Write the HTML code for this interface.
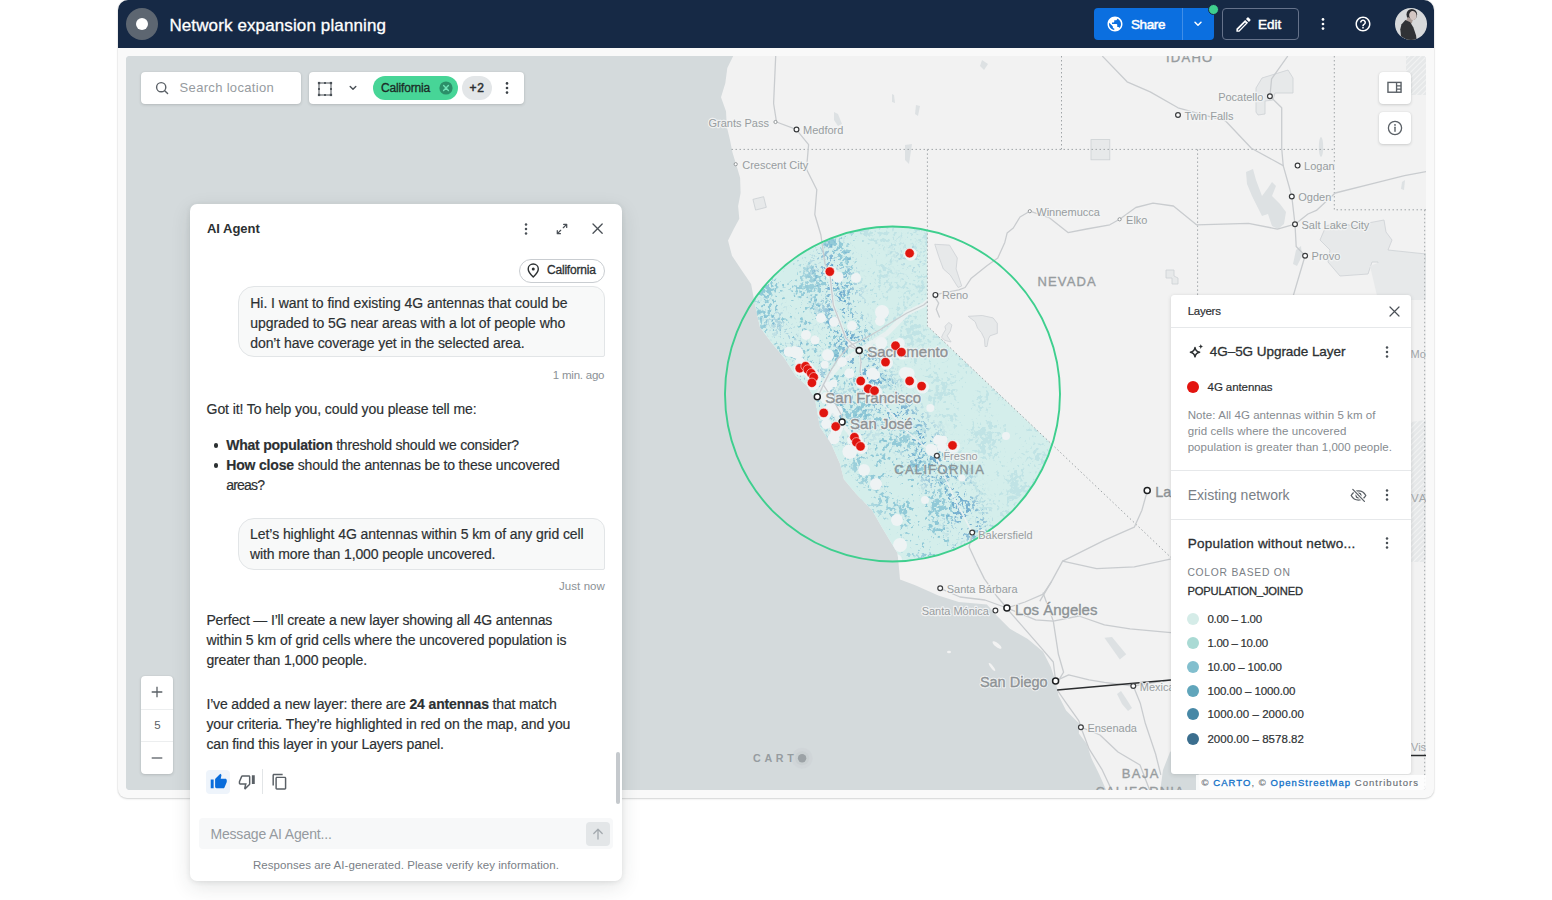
<!DOCTYPE html>
<html lang="en"><head><meta charset="utf-8"><title>Network expansion planning</title><style>
*{box-sizing:border-box;margin:0;padding:0}
html,body{width:1552px;height:900px;overflow:hidden;background:#fff}
body{font-family:"Liberation Sans",sans-serif;position:relative;color:#2c3032}
.abs{position:absolute}
.t{position:absolute;white-space:nowrap}
.frame{position:absolute;left:118px;top:0;width:1316px;height:798px;background:#f9f9f9;border-radius:10px 10px 9px 9px;box-shadow:0 1px 2px rgba(44,48,50,.18),0 0 0 1px rgba(44,48,50,.04)}
.topbar{position:absolute;left:118px;top:0;width:1316px;height:47.500px;background:#162945;border-radius:10px 10px 0 0}
.map{position:absolute;left:126px;top:56px;width:1300px;height:734px;border-radius:4px;overflow:hidden;background:#d4dadc}
.map svg{position:absolute;left:0;top:0}
.card{position:absolute;background:#fff;border-radius:4px;box-shadow:0 1px 3px rgba(44,48,50,.18),0 0 1px rgba(44,48,50,.12)}
.panel{position:absolute;background:#fff;border-radius:8px;box-shadow:0 6px 20px rgba(44,48,50,.12),0 1px 5px rgba(44,48,50,.10)}
.bubble{position:absolute;background:#f8f9f9;border:1px solid #e2e5e7;border-radius:16px 12px 2px 16px}
.sep{position:absolute;height:1px;background:#e6e8ea}
svg.ic{position:absolute;overflow:visible}
</style></head><body>
<div class="frame"></div>

<div class="topbar"></div>
<div class="abs" style="left:126px;top:8px;width:32px;height:32px;border-radius:50%;background:#5d6671"></div>
<div class="abs" style="left:136px;top:18px;width:12px;height:12px;border-radius:50%;background:#fff"></div>
<div class="t" style="left:169.4px;top:13.5px;font-size:17px;line-height:24px;color:#fff;-webkit-text-stroke:.3px #fff;letter-spacing:0.12px;">Network expansion planning</div>
<div class="abs" style="left:1094px;top:8px;width:120px;height:32px;border-radius:4px;background:#0b6fe0"></div>
<div class="abs" style="left:1182px;top:8px;width:1px;height:32px;background:rgba(255,255,255,.22)"></div>
<svg class="ic" style="left:1106.300px;top:15px" width="18" height="18" viewBox="0 0 24 24"><path fill="#fff" d="M12 2C6.48 2 2 6.48 2 12s4.48 10 10 10 10-4.480 10-10S17.520 2 12 2zm-1 17.930c-3.950-.490-7-3.850-7-7.930 0-.620.080-1.210.210-1.790L9 15v1c0 1.100.9 2 2 2v1.930zm6.900-2.540c-.260-.810-1-1.390-1.900-1.390h-1v-3c0-.550-.450-1-1-1H8v-2h2c.550 0 1-.450 1-1V7h2c1.100 0 2-.9 2-2v-.410c2.930 1.190 5 4.060 5 7.410 0 2.080-.8 3.970-2.100 5.390z"/></svg>
<div class="t" style="left:1130.9px;top:14.8px;font-size:13.5px;line-height:19px;color:#fff;-webkit-text-stroke:.5px #fff;letter-spacing:-0.36px;">Share</div>
<svg class="ic" style="left:1193px;top:20px" width="10" height="8" viewBox="0 0 10 8"><path d="M2 2.200L5 5.200L8 2.200" stroke="#fff" stroke-width="1.500" fill="none" stroke-linecap="round" stroke-linejoin="round"/></svg>
<div class="abs" style="left:1207.500px;top:3.500px;width:11px;height:11px;border-radius:50%;background:#3fcf8e;border:1.500px solid #162945"></div>
<div class="abs" style="left:1222px;top:8px;width:77px;height:32px;border-radius:4px;border:1px solid #65728a"></div>
<svg class="ic" style="left:1233.500px;top:14.500px" width="19" height="19" viewBox="0 0 24 24"><path fill="#fff" d="M3 17.250V21h3.750L17.810 9.940l-3.750-3.750L3 17.250zm2.920 2.330H5v-.920l9.060-9.060.920.920-9.060 9.060zM20.710 5.630l-2.340-2.340a.996.996 0 0 0-1.410 0l-1.830 1.830 3.750 3.750 1.830-1.830a.996.996 0 0 0 0-1.410z"/></svg>
<div class="t" style="left:1258.0px;top:14.8px;font-size:13.5px;line-height:19px;color:#fff;-webkit-text-stroke:.5px #fff;letter-spacing:-0.02px;">Edit</div><svg class="ic" style="left:1320.6px;top:16px" width="4" height="16" viewBox="-2 -8 4 16"><circle cx="0" cy="-4.6" r="1.35" fill="#fff"/><circle cx="0" cy="0" r="1.35" fill="#fff"/><circle cx="0" cy="4.6" r="1.35" fill="#fff"/></svg>
<svg class="ic" style="left:1353.700px;top:15px" width="18" height="18" viewBox="0 0 24 24"><path fill="#fff" d="M11 18h2v-2h-2v2zm1-16C6.480 2 2 6.480 2 12s4.480 10 10 10 10-4.480 10-10S17.520 2 12 2zm0 18c-4.410 0-8-3.590-8-8s3.590-8 8-8 8 3.590 8 8-3.590 8-8 8zm0-14c-2.210 0-4 1.790-4 4h2c0-1.100.9-2 2-2s2 .9 2 2c0 2-3 1.750-3 5h2c0-2.250 3-2.500 3-5 0-2.210-1.790-4-4-4z"/></svg>
<svg class="ic" style="left:1394.700px;top:7.600px" width="32" height="32" viewBox="0 0 32 32"><defs><clipPath id="av"><circle cx="16" cy="16" r="16"/></clipPath></defs><g clip-path="url(#av)"><rect width="32" height="32" fill="#d7d9db"/><ellipse cx="16.800" cy="6.600" rx="5.300" ry="5.700" fill="#2b2c30"/><path d="M12.800 9L17.800 11.500L16.800 15.500L11 13Z" fill="#a99a96"/><ellipse cx="17.900" cy="7.600" rx="3.700" ry="4.600" fill="#d3c6c3" transform="rotate(-12 17.900 7.600)"/><path d="M10.400 12L15.300 14.200L18.400 19.600L21.100 27.600L21.600 32L12 32L6 28.400L5.300 21.300L6.400 16.400Z" fill="#303236"/></g></svg>
<div class="map"><svg width="1300" height="734" viewBox="126 56 1300 734"><defs><clipPath id="circ"><circle cx="892.5" cy="394" r="167"/></clipPath><clipPath id="cap"><polygon points="731.5,149.4 927.4,149.4 927.4,326 1170,556.5 1172,600 1160,680 1057,690 1055.9,682.4 1050.8,667.1 1043.1,651.8 1027.8,639 1009.9,628.8 997.1,616 986.9,604.5 958.8,601.9 938.3,595.6 915.3,585.3 900,579.5 898.8,566.1 897.6,553.3 889.9,540.6 882.2,527.8 872,509.9 856.7,494.6 843.9,479.2 840.1,463.9 831.1,443.4 820,427 817.6,414.2 815,398.9 807.3,386.1 795.8,375.9 784.3,358 771.6,342.7 760,327.3 754.9,304.3 751.1,283.9 742.2,271.1 732,255.8 728,240.4 734,228.5 739.3,218.7 738.1,205.9 740.6,193.1 740.1,177.8 736.3,165 732.4,152.2"/></clipPath><filter id="nz" x="0" y="0" width="100%" height="100%" color-interpolation-filters="sRGB"><feTurbulence type="fractalNoise" baseFrequency="0.28" numOctaves="2" seed="7" result="h"/><feTurbulence type="fractalNoise" baseFrequency="0.04" numOctaves="2" seed="21" result="l"/><feComposite in="h" in2="l" operator="arithmetic" k1="0" k2="0.55" k3="0.45" k4="0" result="m"/><feColorMatrix in="m" type="matrix" values="0 0 0 0 0.48  0 0 0 0 0.74  0 0 0 0 0.82  0 0 0 -16 7.1"/></filter><filter id="nz2" x="0" y="0" width="100%" height="100%" color-interpolation-filters="sRGB"><feTurbulence type="fractalNoise" baseFrequency="0.33" numOctaves="2" seed="3" result="h"/><feTurbulence type="fractalNoise" baseFrequency="0.06" numOctaves="2" seed="5" result="l"/><feComposite in="h" in2="l" operator="arithmetic" k1="0" k2="0.6" k3="0.4" k4="0" result="m"/><feColorMatrix in="m" type="matrix" values="0 0 0 0 0.31  0 0 0 0 0.59  0 0 0 0 0.77  0 0 0 -16 7.3"/></filter><filter id="bl"><feGaussianBlur stdDeviation="9"/></filter><mask id="valley"><rect x="700" y="200" width="400" height="400" fill="#000"/><g filter="url(#bl)" stroke="#fff" fill="none" stroke-linecap="round"><path d="M832 262L845 330L868 378L910 430L946 478L972 528" stroke-width="34"/><path d="M800 360L825 400L855 440" stroke-width="22"/><path d="M770 310L800 350" stroke-width="16" stroke="#999"/><path d="M905 250L918 270" stroke-width="14" stroke="#aaa"/></g></mask><mask id="west"><rect x="700" y="200" width="400" height="400" fill="#4a4a4a"/><g filter="url(#bl)" stroke="#fff" fill="none" stroke-linecap="round"><path d="M770 290L820 360L860 420L900 480L940 540" stroke-width="70"/><path d="M832 250L850 330" stroke-width="50"/></g></mask><pattern id="hatch" width="4" height="4" patternUnits="userSpaceOnUse" patternTransform="rotate(45)"><rect width="4" height="4" fill="#e6e8e9"/><rect width="1" height="4" fill="#f2f3f3"/></pattern></defs><rect x="126" y="56" width="1300" height="734" fill="#d4dadc"/><polygon points="733.2,56 727.3,67.9 725.3,83.2 721,97.3 726,111.3 726.8,126.7 729.9,139.4 732.4,152.2 736.3,165 740.1,177.8 740.6,193.1 738.1,205.9 739.3,218.7 734,228.5 728,240.4 732,255.8 742.2,271.1 751.1,283.9 754.9,304.3 760,327.3 771.6,342.7 784.3,358 795.8,375.9 807.3,386.1 815,398.9 817.6,414.2 820,427 831.1,443.4 840.1,463.9 843.9,479.2 856.7,494.6 872,509.9 882.2,527.8 889.9,540.6 897.6,553.3 898.8,566.1 900,579.5 915.3,585.3 938.3,595.6 958.8,601.9 986.9,604.5 997.1,616 1009.9,628.8 1027.8,639 1043.1,651.8 1050.8,667.1 1055.9,682.4 1058.4,695.2 1066.1,710.6 1078.9,723.3 1078.9,733.6 1086.6,743.8 1091.7,759.1 1099.3,774.4 1107,792 1160,792 1163,770 1170,752 1182,742 1196,740 1200,792 1430,792 1430,50 733.2,50" fill="#f2f2f2"/><g fill="#f2f2f2"><ellipse cx="997" cy="645" rx="5.5" ry="2" transform="rotate(38 997 645)"/><ellipse cx="992" cy="667" rx="5" ry="1.3" transform="rotate(52 992 667)"/><ellipse cx="949" cy="652" rx="2" ry="1.2"/></g><path d="M817 392L821 388L826 392L829 402L835 412L839 418L835 419L829 411L823 404L819 398Z" fill="#d4dadc" opacity=".75"/><g fill="#e7e9ea" stroke="#cdd1d4" stroke-width=".8"><rect x="1091" y="139.6" width="18.800" height="20.200"/><rect x="754" y="198" width="11" height="11" transform="rotate(-14 759 203)"/><path d="M1256 88L1262 78L1288 70L1293 78L1293 93L1275 93L1273 100L1265 101L1265 114L1258 115L1256 112Z"/><path d="M1326 226L1340 222L1352 226L1384 220L1386 232L1392 240L1388 250L1426 254L1426 290L1380 292L1378 262L1372 262L1368 274L1340 276L1328 262L1330 250L1320 240Z"/><path d="M934.800 244.300L949.500 245.100L957.300 258L956.100 268.900L961.700 286L958.100 287.500L950.300 275.100L943.300 268.900L938.700 256.400Z"/><path d="M968.200 316.300L982.200 315.500L993.100 317.900L997.300 323.300L997.300 333.400L990 335.800L988.400 338.900L987 346.500L985 346.500L984.500 338.900L981.400 332.600L977.500 328L975.200 321.800Z"/><path d="M948.800 322.500L951.900 324.900L950.300 331.100L947.200 335.800L951.100 342L944.900 340.400L941.500 337.300L943.300 333.400L945.700 329.500L944.900 326.400Z"/><path d="M1166 270L1174 270L1174 276L1178 278L1178 284L1172 284L1172 278L1166 278Z"/><path d="M1370 266L1380 262L1426 262L1426 300L1378 300Z" stroke="none"/></g><rect x="1406" y="56" width="21" height="39" fill="url(#hatch)"/><path d="M1410 422L1427 420L1427 562L1411 562Z" fill="url(#hatch)"/><g fill="#dde1e3"><path d="M1246 172L1253 169L1256 180L1262 196L1268 188L1272 182L1276 186L1272 196L1280 204L1286 212L1284 224L1278 229L1272 226L1268 214L1262 216L1258 208L1252 196L1247 184Z"/><path d="M1296 250L1301 246L1302 256L1297 266L1293 264Z"/><path d="M1104.4 637.700L1112 637L1126.200 654.300L1119.800 659.400Z"/><ellipse cx="1321" cy="147" rx="2.200" ry="10"/><path d="M834 112L838 114L842 124L838 126L834 120Z"/><path d="M892 94L894 95L895 103L892 102Z"/><path d="M916 105L920 106L918 116L915 114Z"/><path d="M905 145L912 144L909 164L905 160Z"/><path d="M982 60L988 64L984 70L980 66Z"/><path d="M1402 182L1405 180L1404 190L1401 189Z"/><path d="M1117 694L1121 691L1127 700L1132 708L1128 711L1122 704Z"/></g><g clip-path="url(#circ)"><g clip-path="url(#cap)"><rect x="720" y="220" width="350" height="350" fill="#d4eeeb"/><g mask="url(#west)"><rect x="720" y="220" width="350" height="350" filter="url(#nz)" opacity=".75"/></g><g mask="url(#valley)"><rect x="720" y="220" width="350" height="350" filter="url(#nz2)" opacity=".75"/></g><g stroke="#eaf1f1" fill="none" stroke-linecap="round" stroke-linejoin="round" opacity=".9"><path d="M817 397L827 379L841.500 362.500L859 350.600L886.700 333.700L907 313L923.700 305L935 295" stroke-width="5"/><path d="M829.600 272L833.300 305L845.600 337.800L859 350.600" stroke-width="3"/><path d="M826 400L834 414L842 424L852 436" stroke-width="4"/><path d="M859 351L862 375L880 400L905 430L936 456L955 500L972 532" stroke-width="1.600"/></g><g fill="#eef3f4"><circle cx="838" cy="277" r="5.5"/><circle cx="856" cy="278" r="5"/><circle cx="821" cy="318" r="5"/><circle cx="834" cy="322" r="5"/><circle cx="852" cy="326" r="5"/><circle cx="806" cy="335" r="5"/><circle cx="815" cy="340" r="4.5"/><circle cx="882" cy="312" r="7"/><circle cx="880" cy="321" r="5"/><circle cx="852" cy="345" r="4"/><circle cx="828" cy="355" r="6"/><circle cx="795" cy="352" r="6"/><circle cx="800" cy="362" r="5"/><circle cx="842" cy="362" r="5"/><circle cx="875" cy="375" r="5"/><circle cx="905" cy="373" r="6"/><circle cx="898" cy="345" r="6"/><circle cx="872" cy="395" r="5"/><circle cx="826" cy="398" r="6"/><circle cx="832" cy="408" r="5"/><circle cx="836" cy="432" r="5.5"/><circle cx="850" cy="452" r="7"/><circle cx="852" cy="440" r="5"/><circle cx="864" cy="470" r="6"/><circle cx="876" cy="484" r="6"/><circle cx="897" cy="520" r="6"/><circle cx="900" cy="545" r="7"/><circle cx="896" cy="560" r="6"/><circle cx="925" cy="500" r="4"/><circle cx="938" cy="440" r="5"/><circle cx="942" cy="447" r="5"/><circle cx="930" cy="448" r="4"/><circle cx="1006" cy="436" r="4"/><circle cx="962" cy="478" r="3.5"/><circle cx="827.7" cy="386.4" r="5"/><circle cx="833.5" cy="383.5" r="4"/><circle cx="827.7" cy="410.9" r="5"/><circle cx="837.8" cy="410.9" r="5"/><circle cx="833.5" cy="438.4" r="6"/><circle cx="826.2" cy="423.9" r="5"/><circle cx="872.5" cy="373.4" r="6"/><circle cx="849.4" cy="373.4" r="5"/><circle cx="908.6" cy="373.4" r="6"/><circle cx="881.2" cy="343" r="6"/><circle cx="899.9" cy="343" r="5"/><circle cx="849.4" cy="451.4" r="7"/><circle cx="930.3" cy="408" r="4"/><circle cx="931.7" cy="450" r="6"/><circle cx="943.3" cy="439.8" r="4"/><circle cx="797.3" cy="353.1" r="6"/><circle cx="788.7" cy="351.7" r="5"/><circle cx="824.8" cy="364.7" r="4"/><circle cx="910.6" cy="254.2" r="6.500"/><circle cx="830.8" cy="272.6" r="6.500"/><circle cx="896.5" cy="346.7" r="6.500"/><circle cx="902.4" cy="353.1" r="6.500"/><circle cx="886.5" cy="363.1" r="6.500"/><circle cx="861.7" cy="382" r="6.500"/><circle cx="869.2" cy="389.7" r="6.500"/><circle cx="875.5" cy="391.7" r="6.500"/><circle cx="910.6" cy="382" r="6.500"/><circle cx="922.6" cy="387.1" r="6.500"/><circle cx="800.7" cy="369.2" r="6.500"/><circle cx="806.5" cy="367.2" r="6.500"/><circle cx="808.8" cy="370.5" r="6.500"/><circle cx="812.2" cy="374.3" r="6.500"/><circle cx="814.7" cy="378.2" r="6.500"/><circle cx="812.9" cy="383.8" r="6.500"/><circle cx="824.7" cy="413.9" r="6.500"/><circle cx="836.7" cy="427.5" r="6.500"/><circle cx="855.4" cy="438.2" r="6.500"/><circle cx="857.4" cy="443.3" r="6.500"/><circle cx="861.5" cy="447.4" r="6.500"/><circle cx="953.5" cy="446.4" r="6.500"/></g><g stroke="#c9cdd0" stroke-width="1.300" fill="none" stroke-linecap="round" stroke-linejoin="round"><path d="M817.600 397L823.400 384.900L829.100 373.400L837.800 358.900L849.400 345.900L859.300 350.500"/><path d="M849.400 345.900L862 340L879.700 330L892 322L907 313L923.700 305L935 295"/><path d="M823.400 384.900L828 392L836 405L842 416L842 422"/><path d="M859.300 350.500L861 362L860 372"/></g></g></g><g stroke="#a0a5a8" stroke-width="1" fill="none" stroke-dasharray="1.500 2.500"><path d="M731.5 149.4L1334.3 149.4"/><path d="M1061.5 56L1061.5 149.4"/><path d="M1197.6 149.4L1197.6 300"/><path d="M1334.3 56L1334.3 209.8L1427 209.8"/><path d="M1424.7 209.8L1424.7 792"/><path d="M927.4 149.4L927.4 326L1172 558.5"/></g><g stroke="#c9cccf" stroke-width="1.300" fill="none" stroke-linejoin="round" stroke-linecap="round"><path d="M775.7 56L773.6 103.5L776.5 122L796.2 129.4L808.6 144.6L806.5 169.2L816.8 189.8L814.8 214.5L820.9 235L825 263.8L829.6 272L833.3 305L845.6 337.8L859.2 350.6"/><path d="M935.2 294.7L958.9 289.9L965.1 287.5L971.3 278.2L986.9 265.8L997.8 258L1004.8 242.4L1007.1 233.1L1013.3 228L1020 217L1029.8 211.2L1049 217.6L1068 232.6L1086.7 229L1109.8 224.8L1119.6 219.3L1135.8 207.5L1153 203.1L1173.4 206L1196.5 224.8L1248.5 223.4L1277.4 229.1L1295 224.2"/><path d="M935.6 298.4L938.7 303.1L936.3 309.3L939.4 317.1"/><path d="M1102.6 56.4L1127.1 81.8L1150.2 91.9L1178 107.8L1225.4 120.8L1251.4 148.2L1283.2 165.6L1288.9 185.8L1291.8 196.5L1295 224.2L1296.2 246.5L1305.1 255.7L1297.6 281L1293.3 295.6"/><path d="M1287.5 56.4L1271.6 78.9L1269.9 96.2L1281.7 107.8L1281.7 148.2L1283.2 165.6"/><path d="M1295 224.2L1308 214L1316.4 210.4L1335.2 193L1375.6 182.9L1404.5 175.7L1427 171.4"/><path d="M1147.5 490.2L1141.9 510.2L1134.3 527.2L1104.2 540.4L1062.6 561.1L1051.3 581.9L1040 600.8"/><path d="M1062.6 561.1L1096.6 568.7L1134.3 566.8L1170.2 559.2"/><path d="M972.2 532.6L969.1 547L976.8 563.6L984.4 578.9L997.2 596.8L1006.9 608"/><path d="M1006.9 608L1025 602L1043.2 594.2L1051.3 581.9"/><path d="M1006.9 608L1035.6 619.8L1053.3 621.1L1078.9 616L1104.4 624.9L1130 628.8L1170.9 632.6"/><path d="M1006.8 608.3L1020.1 623.7L1038 644.1L1053.3 662L1055.6 680.9"/><path d="M1043.1 593L1053.3 621.1L1058.4 654.3L1063.6 672.2L1057 683"/><path d="M1055.6 680.9L1068.7 674.8L1089.1 679.9L1104.4 682.4L1133.3 686L1155.6 682.4L1171 680"/><path d="M1057.2 690L1066.1 702.9L1078.9 720.8L1080.9 727.2L1089.1 748.9L1101.9 769.3L1112.1 791"/><path d="M1133.3 686L1140.2 702.9L1145.3 723.3L1155.6 754L1160.7 774.4"/><path d="M1080.9 727.2L1100 735L1118 752L1140 765L1150 791"/><path d="M940.2 588.3L960 597L985 600L1006.9 608"/></g><path d="M1057.200 690.100L1170.900 679.900" stroke="#2a2c2e" stroke-width="1.500" fill="none"/><path d="M1410 755.500L1427 755.500" stroke="#2a2c2e" stroke-width="1.500" fill="none"/><circle cx="892.500" cy="394" r="167.500" fill="none" stroke="#3ecf8e" stroke-width="1.900"/><g style="font-family:'Liberation Sans',sans-serif;fill:#979c9f;stroke:#979c9f;stroke-width:.35px" font-size="13" letter-spacing="1.800"><text x="1166" y="61.500" textLength="48" lengthAdjust="spacing">IDAHO</text><text x="1037.500" y="286.200" textLength="60" lengthAdjust="spacing">NEVADA</text><text x="894.200" y="474.300" textLength="91.500" lengthAdjust="spacing" style="stroke:#8b9598;fill:#8b9598">CALIFORNIA</text><text x="1121.800" y="777.500" textLength="38.500" lengthAdjust="spacing">BAJA</text><text x="1095.500" y="796" textLength="90" lengthAdjust="spacing">CALIFORNIA</text></g><circle cx="775.5" cy="122" r="1.6" fill="#fff" stroke="#8a8e91" stroke-width="0.9"/><circle cx="796.5" cy="129.5" r="2.4" fill="#fff" stroke="#3a3c3e" stroke-width="1.2"/><circle cx="735.7" cy="164.2" r="1.6" fill="#fff" stroke="#8a8e91" stroke-width="0.9"/><circle cx="1029.8" cy="211.2" r="1.6" fill="#fff" stroke="#8a8e91" stroke-width="0.9"/><circle cx="1119.6" cy="219.3" r="1.6" fill="#fff" stroke="#8a8e91" stroke-width="0.9"/><circle cx="935.4" cy="294.9" r="2.4" fill="#fff" stroke="#3a3c3e" stroke-width="1.2"/><circle cx="1178" cy="115" r="2.4" fill="#fff" stroke="#3a3c3e" stroke-width="1.2"/><circle cx="1269.9" cy="96.2" r="2.4" fill="#fff" stroke="#3a3c3e" stroke-width="1.2"/><circle cx="1297.6" cy="165.6" r="2.4" fill="#fff" stroke="#3a3c3e" stroke-width="1.2"/><circle cx="1291.8" cy="196.5" r="2.4" fill="#fff" stroke="#3a3c3e" stroke-width="1.2"/><circle cx="1295" cy="224.2" r="2.4" fill="#fff" stroke="#3a3c3e" stroke-width="1.2"/><circle cx="1305.1" cy="255.7" r="2.4" fill="#fff" stroke="#3a3c3e" stroke-width="1.2"/><circle cx="859.2" cy="350.6" r="3" fill="#fff" stroke="#1e2022" stroke-width="1.5"/><circle cx="817.3" cy="396.8" r="3" fill="#fff" stroke="#1e2022" stroke-width="1.5"/><circle cx="842.1" cy="421.9" r="3" fill="#fff" stroke="#1e2022" stroke-width="1.5"/><circle cx="936.9" cy="455.7" r="2.4" fill="#fff" stroke="#3a3c3e" stroke-width="1.2"/><circle cx="972.2" cy="532.6" r="2.4" fill="#fff" stroke="#3a3c3e" stroke-width="1.2"/><circle cx="940.2" cy="588.3" r="2.4" fill="#fff" stroke="#3a3c3e" stroke-width="1.2"/><circle cx="995.4" cy="610.6" r="2.4" fill="#fff" stroke="#3a3c3e" stroke-width="1.2"/><circle cx="1006.9" cy="608" r="3" fill="#fff" stroke="#1e2022" stroke-width="1.5"/><circle cx="1055.6" cy="680.9" r="3" fill="#fff" stroke="#1e2022" stroke-width="1.5"/><circle cx="1080.9" cy="727.2" r="2.4" fill="#fff" stroke="#3a3c3e" stroke-width="1.2"/><circle cx="1133.3" cy="686" r="2.4" fill="#fff" stroke="#3a3c3e" stroke-width="1.2"/><circle cx="1147.2" cy="490.5" r="3" fill="#fff" stroke="#1e2022" stroke-width="1.5"/><g style="font-family:'Liberation Sans',sans-serif"><text x="769" y="126.56" font-size="11" text-anchor="end" style="fill:#f4f5f5;stroke:#f4f5f5;stroke-width:2.400px;stroke-linejoin:round;opacity:.85">Grants Pass</text><text x="803" y="134.06" font-size="11" style="fill:#f4f5f5;stroke:#f4f5f5;stroke-width:2.400px;stroke-linejoin:round;opacity:.85">Medford</text><text x="742.2" y="168.76" font-size="11" style="fill:#f4f5f5;stroke:#f4f5f5;stroke-width:2.400px;stroke-linejoin:round;opacity:.85">Crescent City</text><text x="1036.3" y="215.76" font-size="11" style="fill:#f4f5f5;stroke:#f4f5f5;stroke-width:2.400px;stroke-linejoin:round;opacity:.85">Winnemucca</text><text x="1126.1" y="223.86" font-size="11" style="fill:#f4f5f5;stroke:#f4f5f5;stroke-width:2.400px;stroke-linejoin:round;opacity:.85">Elko</text><text x="941.9" y="299.46" font-size="11" style="fill:#f4f5f5;stroke:#f4f5f5;stroke-width:2.400px;stroke-linejoin:round;opacity:.85">Reno</text><text x="1184.5" y="119.56" font-size="11" style="fill:#f4f5f5;stroke:#f4f5f5;stroke-width:2.400px;stroke-linejoin:round;opacity:.85">Twin Falls</text><text x="1263.4" y="100.76" font-size="11" text-anchor="end" style="fill:#f4f5f5;stroke:#f4f5f5;stroke-width:2.400px;stroke-linejoin:round;opacity:.85">Pocatello</text><text x="1304.1" y="170.16" font-size="11" style="fill:#f4f5f5;stroke:#f4f5f5;stroke-width:2.400px;stroke-linejoin:round;opacity:.85">Logan</text><text x="1298.3" y="201.06" font-size="11" style="fill:#f4f5f5;stroke:#f4f5f5;stroke-width:2.400px;stroke-linejoin:round;opacity:.85">Ogden</text><text x="1301.5" y="228.76" font-size="11" style="fill:#f4f5f5;stroke:#f4f5f5;stroke-width:2.400px;stroke-linejoin:round;opacity:.85">Salt Lake City</text><text x="1311.6" y="260.26" font-size="11" style="fill:#f4f5f5;stroke:#f4f5f5;stroke-width:2.400px;stroke-linejoin:round;opacity:.85">Provo</text><text x="867.2" y="357.2" font-size="15" style="fill:#f4f5f5;stroke:#f4f5f5;stroke-width:2.400px;stroke-linejoin:round;opacity:.85">Sacramento</text><text x="825.3" y="403.4" font-size="15" style="fill:#f4f5f5;stroke:#f4f5f5;stroke-width:2.400px;stroke-linejoin:round;opacity:.85">San Francisco</text><text x="850.1" y="428.5" font-size="15" style="fill:#f4f5f5;stroke:#f4f5f5;stroke-width:2.400px;stroke-linejoin:round;opacity:.85">San José</text><text x="943.4" y="460.26" font-size="11" style="fill:#f4f5f5;stroke:#f4f5f5;stroke-width:2.400px;stroke-linejoin:round;opacity:.85">Fresno</text><text x="978.2" y="539.36" font-size="11" style="fill:#f4f5f5;stroke:#f4f5f5;stroke-width:2.400px;stroke-linejoin:round;opacity:.85">Bakersfield</text><text x="946.7" y="592.86" font-size="11" style="fill:#f4f5f5;stroke:#f4f5f5;stroke-width:2.400px;stroke-linejoin:round;opacity:.85">Santa Bárbara</text><text x="988.9" y="615.16" font-size="11" text-anchor="end" style="fill:#f4f5f5;stroke:#f4f5f5;stroke-width:2.400px;stroke-linejoin:round;opacity:.85">Santa Mónica</text><text x="1014.9" y="614.6" font-size="15" style="fill:#f4f5f5;stroke:#f4f5f5;stroke-width:2.400px;stroke-linejoin:round;opacity:.85">Los Ángeles</text><text x="1047.6" y="687.32" font-size="14.5" text-anchor="end" style="fill:#f4f5f5;stroke:#f4f5f5;stroke-width:2.400px;stroke-linejoin:round;opacity:.85">San Diego</text><text x="1087.4" y="731.76" font-size="11" style="fill:#f4f5f5;stroke:#f4f5f5;stroke-width:2.400px;stroke-linejoin:round;opacity:.85">Ensenada</text><text x="1139.8" y="690.56" font-size="11" style="fill:#f4f5f5;stroke:#f4f5f5;stroke-width:2.400px;stroke-linejoin:round;opacity:.85">Mexicali</text><text x="1155.2" y="496.92" font-size="14.5" style="fill:#f4f5f5;stroke:#f4f5f5;stroke-width:2.400px;stroke-linejoin:round;opacity:.85">Las Vegas</text><text x="769" y="126.56" font-size="11" text-anchor="end" style="fill:#989da0">Grants Pass</text><text x="803" y="134.06" font-size="11" style="fill:#989da0">Medford</text><text x="742.2" y="168.76" font-size="11" style="fill:#989da0">Crescent City</text><text x="1036.3" y="215.76" font-size="11" style="fill:#989da0">Winnemucca</text><text x="1126.1" y="223.86" font-size="11" style="fill:#989da0">Elko</text><text x="941.9" y="299.46" font-size="11" style="fill:#989da0">Reno</text><text x="1184.5" y="119.56" font-size="11" style="fill:#989da0">Twin Falls</text><text x="1263.4" y="100.76" font-size="11" text-anchor="end" style="fill:#989da0">Pocatello</text><text x="1304.1" y="170.16" font-size="11" style="fill:#989da0">Logan</text><text x="1298.3" y="201.06" font-size="11" style="fill:#989da0">Ogden</text><text x="1301.5" y="228.76" font-size="11" style="fill:#989da0">Salt Lake City</text><text x="1311.6" y="260.26" font-size="11" style="fill:#989da0">Provo</text><text x="867.2" y="357.2" font-size="15" style="fill:#8d9295;stroke:#8d9295;stroke-width:.35px">Sacramento</text><text x="825.3" y="403.4" font-size="15" style="fill:#8d9295;stroke:#8d9295;stroke-width:.35px">San Francisco</text><text x="850.1" y="428.5" font-size="15" style="fill:#8d9295;stroke:#8d9295;stroke-width:.35px">San José</text><text x="943.4" y="460.26" font-size="11" style="fill:#989da0">Fresno</text><text x="978.2" y="539.36" font-size="11" style="fill:#989da0">Bakersfield</text><text x="946.7" y="592.86" font-size="11" style="fill:#989da0">Santa Bárbara</text><text x="988.9" y="615.16" font-size="11" text-anchor="end" style="fill:#989da0">Santa Mónica</text><text x="1014.9" y="614.6" font-size="15" style="fill:#8d9295;stroke:#8d9295;stroke-width:.35px">Los Ángeles</text><text x="1047.6" y="687.32" font-size="14.5" text-anchor="end" style="fill:#8d9295;stroke:#8d9295;stroke-width:.35px">San Diego</text><text x="1087.4" y="731.76" font-size="11" style="fill:#989da0">Ensenada</text><text x="1139.8" y="690.56" font-size="11" style="fill:#989da0">Mexicali</text><text x="1155.2" y="496.92" font-size="14.5" style="fill:#8d9295;stroke:#8d9295;stroke-width:.35px">Las Vegas</text></g><g style="font-family:'Liberation Sans',sans-serif;fill:#a3a7aa" font-size="11"><text x="1410.500" y="358">Moab</text><text x="1411" y="751">Vista</text><text x="1411" y="501.500" font-size="11.500" letter-spacing="1">VAJO</text></g><g fill="#e0150f" stroke="#fff" stroke-width=".8" stroke-opacity=".65"><circle cx="909.6" cy="253.2" r="4.700"/><circle cx="829.8" cy="271.6" r="4.700"/><circle cx="895.5" cy="345.7" r="4.700"/><circle cx="901.4" cy="352.1" r="4.700"/><circle cx="885.5" cy="362.1" r="4.700"/><circle cx="860.7" cy="381" r="4.700"/><circle cx="868.2" cy="388.7" r="4.700"/><circle cx="874.5" cy="390.7" r="4.700"/><circle cx="909.6" cy="381" r="4.700"/><circle cx="921.6" cy="386.1" r="4.700"/><circle cx="799.7" cy="368.2" r="4.700"/><circle cx="805.5" cy="366.2" r="4.700"/><circle cx="807.8" cy="369.5" r="4.700"/><circle cx="811.2" cy="373.3" r="4.700"/><circle cx="813.7" cy="377.2" r="4.700"/><circle cx="811.9" cy="382.8" r="4.700"/><circle cx="823.7" cy="412.9" r="4.700"/><circle cx="835.7" cy="426.5" r="4.700"/><circle cx="854.4" cy="437.2" r="4.700"/><circle cx="856.4" cy="442.3" r="4.700"/><circle cx="860.5" cy="446.4" r="4.700"/><circle cx="952.5" cy="445.4" r="4.700"/></g><circle cx="802.100" cy="758.200" r="10.500" fill="#cdd2d5" opacity=".6"/><circle cx="802.100" cy="758.200" r="7" fill="#c8cdd0" opacity=".7"/><circle cx="802.100" cy="758.200" r="4.200" fill="#9ca2a6"/><text x="753" y="762.100" font-size="10.700" font-weight="700" letter-spacing="3.700" style="font-family:'Liberation Sans',sans-serif;fill:#969ca0">CART</text></svg></div>
<div class="card" style="left:141px;top:72px;width:160px;height:32px"></div>
<svg class="ic" style="left:155px;top:81px" width="14" height="14" viewBox="0 0 14 14"><circle cx="6.200" cy="6.200" r="4.600" stroke="#5a6066" stroke-width="1.400" fill="none"/><path d="M9.700 9.700L12.600 12.600" stroke="#5a6066" stroke-width="1.400" stroke-linecap="round"/></svg>
<div class="t" style="left:179.6px;top:79.4px;font-size:13px;line-height:18px;color:#969ba0;letter-spacing:0.32px;">Search location</div>
<div class="card" style="left:309px;top:72px;width:214.700px;height:32px"></div>
<svg class="ic" style="left:317px;top:80.500px" width="16" height="16" viewBox="0 0 16 16"><rect x="2" y="2" width="12" height="12" fill="none" stroke="#4a5056" stroke-width="1"/><g fill="#4a5056"><rect x=".9" y=".9" width="2.300" height="2.300"/><rect x="12.800" y=".9" width="2.300" height="2.300"/><rect x=".9" y="12.800" width="2.300" height="2.300"/><rect x="12.800" y="12.800" width="2.300" height="2.300"/><rect x="7" y="1.100" width="2" height="1.800"/><rect x="7" y="13.100" width="2" height="1.800"/><rect x="1.100" y="7" width="1.800" height="2"/><rect x="13.100" y="7" width="1.800" height="2"/></g></svg>
<svg class="ic" style="left:348px;top:84px" width="10" height="8" viewBox="0 0 10 8"><path d="M2.200 2.500L5 5.300L7.800 2.500" stroke="#4a5056" stroke-width="1.400" fill="none" stroke-linecap="round" stroke-linejoin="round"/></svg>
<div class="abs" style="left:373px;top:76px;width:85px;height:23.500px;border-radius:12px;background:#47d597"></div>
<div class="t" style="left:381.0px;top:79.7px;font-size:12px;line-height:17px;color:#1b2b26;-webkit-text-stroke:.3px #1b2b26;letter-spacing:-0.17px;">California</div>
<svg class="ic" style="left:438.500px;top:81px" width="14" height="14" viewBox="0 0 14 14"><circle cx="7" cy="7" r="6.600" fill="#2c8f69"/><path d="M4.600 4.600L9.400 9.400M9.400 4.600L4.600 9.400" stroke="#6fe3b6" stroke-width="1.400" stroke-linecap="round"/></svg>
<div class="abs" style="left:462px;top:76px;width:30px;height:23.500px;border-radius:12px;background:#e3e6e8"></div>
<div class="t" style="left:469.5px;top:79.7px;font-size:12px;line-height:17px;color:#2c3032;-webkit-text-stroke:.5px #2c3032;letter-spacing:0.81px;">+2</div><svg class="ic" style="left:505.3px;top:80px" width="4" height="16" viewBox="-2 -8 4 16"><circle cx="0" cy="-4.6" r="1.3" fill="#3a4046"/><circle cx="0" cy="0" r="1.3" fill="#3a4046"/><circle cx="0" cy="4.6" r="1.3" fill="#3a4046"/></svg>
<div class="card" style="left:1379px;top:72px;width:32px;height:32px"></div>
<svg class="ic" style="left:1387.400px;top:81.300px" width="15" height="13.100" viewBox="0 0 16 14"><rect x="1" y="1.500" width="14" height="10.500" fill="none" stroke="#5a6066" stroke-width="1.500"/><path d="M10.200 1.500V12M10.200 5.200H15M10.200 8.600H15" stroke="#5a6066" stroke-width="1.400" fill="none"/></svg>
<div class="card" style="left:1379px;top:112px;width:32px;height:32px"></div>
<svg class="ic" style="left:1387px;top:120px" width="16" height="16" viewBox="0 0 16 16"><circle cx="8" cy="8" r="6.600" fill="none" stroke="#5a6066" stroke-width="1.300"/><path d="M8 7.200V11.300" stroke="#5a6066" stroke-width="1.400" stroke-linecap="round"/><circle cx="8" cy="4.900" r=".9" fill="#5a6066"/></svg>
<div class="card" style="left:141px;top:676px;width:32px;height:98px"></div>
<div class="sep" style="left:141px;top:708.500px;width:32px;background:#eceeef"></div>
<div class="sep" style="left:141px;top:741px;width:32px;background:#eceeef"></div>
<svg class="ic" style="left:151px;top:686px" width="12" height="12" viewBox="0 0 12 12"><path d="M6 .7V11.300M.7 6H11.300" stroke="#5a6066" stroke-width="1.300"/></svg>
<div class="t" style="left:154.2px;top:717.1px;font-size:11.5px;line-height:16px;color:#5a6066;">5</div>
<svg class="ic" style="left:151px;top:752px" width="12" height="12" viewBox="0 0 12 12"><path d="M.7 6H11.300" stroke="#5a6066" stroke-width="1.300"/></svg>

<div class="card" style="left:1171px;top:295px;width:239.500px;height:479px;border-radius:3px;box-shadow:0 1px 4px rgba(44,48,50,.14),0 0 1px rgba(44,48,50,.10)"></div>
<div class="t" style="left:1187.7px;top:303.4px;font-size:11.5px;line-height:16px;color:#2c3032;-webkit-text-stroke:.18px #2c3032;letter-spacing:-0.25px;">Layers</div><svg class="ic" style="left:1389.1px;top:305.9px" width="11" height="11" viewBox="-5.5 -5.5 11 11"><path d="M-4.5 -4.5L4.5 4.5M4.5 -4.5L-4.5 4.5" stroke="#4a5056" stroke-width="1.2" fill="none" stroke-linecap="round"/></svg>
<div class="sep" style="left:1171px;top:327px;width:239.500px"></div>
<svg class="ic" style="left:1187.800px;top:342.500px" width="17" height="17" viewBox="0 0 17 17"><path d="M7 4.600C7.500 7.500 8.700 8.700 11.600 9.200C8.700 9.700 7.500 10.900 7 13.800C6.500 10.900 5.300 9.700 2.400 9.200C5.300 8.700 6.500 7.500 7 4.600Z" fill="none" stroke="#2c3032" stroke-width="1.550" stroke-linejoin="round"/><path d="M12.800 1C13.100 2.700 13.700 3.300 15.400 3.600C13.700 3.900 13.100 4.500 12.800 6.200C12.500 4.500 11.900 3.900 10.200 3.600C11.900 3.300 12.500 2.700 12.800 1Z" fill="#2c3032"/></svg>
<div class="t" style="left:1209.8px;top:342.4px;font-size:13.5px;line-height:19px;color:#2c3032;-webkit-text-stroke:.3px #2c3032;letter-spacing:-0.05px;">4G&ndash;5G Upgrade Layer</div><svg class="ic" style="left:1384.5px;top:343.9px" width="4" height="16" viewBox="-2 -8 4 16"><circle cx="0" cy="-4.6" r="1.25" fill="#4a5056"/><circle cx="0" cy="0" r="1.25" fill="#4a5056"/><circle cx="0" cy="4.6" r="1.25" fill="#4a5056"/></svg>
<div class="abs" style="left:1187px;top:381.400px;width:12px;height:12px;border-radius:50%;background:#e3140f"></div>
<div class="t" style="left:1207.6px;top:379.4px;font-size:11.5px;line-height:16px;color:#2c3032;-webkit-text-stroke:.18px #2c3032;letter-spacing:-0.09px;">4G antennas</div><div class="t" style="left:1187.7px;top:407.4px;font-size:11.5px;line-height:16px;color:#868b90;letter-spacing:0.07px;">Note: All 4G antennas within 5 km of</div><div class="t" style="left:1187.7px;top:423.2px;font-size:11.5px;line-height:16px;color:#868b90;letter-spacing:0.09px;">grid cells where the uncovered</div><div class="t" style="left:1187.7px;top:439.0px;font-size:11.5px;line-height:16px;color:#868b90;letter-spacing:0.04px;">population is greater than 1,000 people.</div>
<div class="sep" style="left:1171px;top:470px;width:239.500px"></div>
<div class="t" style="left:1187.7px;top:485.4px;font-size:14px;line-height:20px;color:#7a8086;">Existing network</div>
<svg class="ic" style="left:1350px;top:487.500px" width="17" height="15" viewBox="0 0 17 15"><path d="M1.200 7.500C2.800 4.500 5.400 2.900 8.500 2.900C11.600 2.900 14.200 4.500 15.800 7.500C14.200 10.500 11.600 12.100 8.500 12.100C5.400 12.100 2.800 10.500 1.200 7.500Z" fill="none" stroke="#5a6066" stroke-width="1.250"/><circle cx="8.500" cy="7.500" r="2.400" fill="none" stroke="#5a6066" stroke-width="1.250"/><path d="M2.600 1.200L14.600 13.600" stroke="#fff" stroke-width="3"/><path d="M2.800 1.400L14.400 13.400" stroke="#5a6066" stroke-width="1.250" stroke-linecap="round"/></svg>
<svg class="ic" style="left:1384.5px;top:487.4px" width="4" height="16" viewBox="-2 -8 4 16"><circle cx="0" cy="-4.6" r="1.25" fill="#4a5056"/><circle cx="0" cy="0" r="1.25" fill="#4a5056"/><circle cx="0" cy="4.6" r="1.25" fill="#4a5056"/></svg>
<div class="sep" style="left:1171px;top:518.500px;width:239.500px"></div>
<div class="t" style="left:1187.7px;top:533.6px;font-size:13.5px;line-height:19px;color:#2c3032;-webkit-text-stroke:.3px #2c3032;letter-spacing:0.24px;">Population without netwo...</div><svg class="ic" style="left:1384.5px;top:535.1px" width="4" height="16" viewBox="-2 -8 4 16"><circle cx="0" cy="-4.6" r="1.25" fill="#4a5056"/><circle cx="0" cy="0" r="1.25" fill="#4a5056"/><circle cx="0" cy="4.6" r="1.25" fill="#4a5056"/></svg><div class="t" style="left:1187.4px;top:565.6px;font-size:10.3px;line-height:14px;color:#7a8086;letter-spacing:0.76px;">COLOR BASED ON</div><div class="t" style="left:1187.4px;top:583.0px;font-size:11.2px;line-height:16px;color:#2c3032;-webkit-text-stroke:.3px #2c3032;letter-spacing:-0.18px;">POPULATION_JOINED</div><div class="abs" style="left:1187.200px;top:612.6px;width:12px;height:12px;border-radius:50%;background:#d5ece8"></div><div class="t" style="left:1207.4px;top:610.6px;font-size:11.5px;line-height:16px;color:#2c3032;-webkit-text-stroke:.18px #2c3032;letter-spacing:-0.29px;">0.00 &ndash; 1.00</div><div class="abs" style="left:1187.200px;top:636.8px;width:12px;height:12px;border-radius:50%;background:#a9dad4"></div><div class="t" style="left:1207.4px;top:634.8px;font-size:11.5px;line-height:16px;color:#2c3032;-webkit-text-stroke:.18px #2c3032;letter-spacing:-0.30px;">1.00 &ndash; 10.00</div><div class="abs" style="left:1187.200px;top:660.6px;width:12px;height:12px;border-radius:50%;background:#82bfce"></div><div class="t" style="left:1207.4px;top:658.6px;font-size:11.5px;line-height:16px;color:#2c3032;-webkit-text-stroke:.18px #2c3032;letter-spacing:-0.18px;">10.00 &ndash; 100.00</div><div class="abs" style="left:1187.200px;top:684.5px;width:12px;height:12px;border-radius:50%;background:#60a5bb"></div><div class="t" style="left:1207.4px;top:682.5px;font-size:11.5px;line-height:16px;color:#2c3032;-webkit-text-stroke:.18px #2c3032;letter-spacing:-0.10px;">100.00 &ndash; 1000.00</div><div class="abs" style="left:1187.200px;top:708.3px;width:12px;height:12px;border-radius:50%;background:#4788a6"></div><div class="t" style="left:1207.4px;top:706.3px;font-size:11.5px;line-height:16px;color:#2c3032;-webkit-text-stroke:.18px #2c3032;letter-spacing:0.04px;">1000.00 &ndash; 2000.00</div><div class="abs" style="left:1187.200px;top:732.5px;width:12px;height:12px;border-radius:50%;background:#3b6e8e"></div><div class="t" style="left:1207.4px;top:730.5px;font-size:11.5px;line-height:16px;color:#2c3032;-webkit-text-stroke:.18px #2c3032;letter-spacing:0.04px;">2000.00 &ndash; 8578.82</div>
<div class="abs" style="left:1196px;top:775px;width:230px;height:15px;background:rgba(255,255,255,.82);border-radius:0 0 4px 0"></div>
<div class="t" style="left:1201.6px;top:775.8px;font-size:9.5px;line-height:13px;color:#6a7076;-webkit-text-stroke:.15px #6a7076;letter-spacing:1.04px;">&copy; <span style="color:#1271c8;-webkit-text-stroke:.3px #1271c8">CARTO</span>, &copy; <span style="color:#1271c8;-webkit-text-stroke:.3px #1271c8">OpenStreetMap</span> Contributors</div>
<div class="panel" style="left:190px;top:204px;width:431.500px;height:677px;border-radius:7px"></div>
<div class="t" style="left:206.9px;top:220.0px;font-size:13px;line-height:18px;color:#2c3032;font-weight:700;">AI Agent</div><svg class="ic" style="left:523.6px;top:221px" width="4" height="16" viewBox="-2 -8 4 16"><circle cx="0" cy="-4.6" r="1.25" fill="#4a5056"/><circle cx="0" cy="0" r="1.25" fill="#4a5056"/><circle cx="0" cy="4.6" r="1.25" fill="#4a5056"/></svg>
<svg class="ic" style="left:555.500px;top:223.200px" width="12" height="12" viewBox="0 0 12 12"><path d="M7.300 4.700L10.600 1.400M7.600 1.300H10.700V4.400M4.700 7.300L1.400 10.600M1.300 7.600V10.700H4.400" stroke="#4a5056" stroke-width="1.250" fill="none" stroke-linecap="round" stroke-linejoin="round"/></svg>
<svg class="ic" style="left:591.7px;top:223.4px" width="11.2" height="11.2" viewBox="-5.6 -5.6 11.2 11.2"><path d="M-4.6 -4.6L4.6 4.6M4.6 -4.6L-4.6 4.6" stroke="#4a5056" stroke-width="1.3" fill="none" stroke-linecap="round"/></svg>
<div class="abs" style="left:519px;top:258.500px;width:86px;height:24px;border-radius:12px;border:1px solid #c9cdd1;background:#fff"></div>
<svg class="ic" style="left:527px;top:263px" width="12.500" height="15" viewBox="0 0 12.500 15"><path d="M6.250 1C3.400 1 1.200 3.150 1.200 5.900C1.200 9.200 6.250 13.900 6.250 13.900C6.250 13.900 11.300 9.200 11.300 5.900C11.300 3.150 9.100 1 6.250 1Z" fill="none" stroke="#2c3032" stroke-width="1.400" stroke-linejoin="round"/><circle cx="6.250" cy="5.900" r="1.500" fill="#2c3032"/></svg>
<div class="t" style="left:547.0px;top:262.2px;font-size:12px;line-height:17px;color:#2c3032;-webkit-text-stroke:.3px #2c3032;letter-spacing:-0.20px;">California</div>
<div class="bubble" style="left:238px;top:286.200px;width:367px;height:71.300px"></div>
<div class="t" style="left:250.3px;top:292.6px;font-size:14px;line-height:20px;color:#2c3032;-webkit-text-stroke:.18px #2c3032;letter-spacing:-0.05px;">Hi. I want to find existing 4G antennas that could be</div><div class="t" style="left:250.3px;top:312.6px;font-size:14px;line-height:20px;color:#2c3032;-webkit-text-stroke:.18px #2c3032;letter-spacing:-0.07px;">upgraded to 5G near areas with a lot of people who</div><div class="t" style="left:250.3px;top:332.6px;font-size:14px;line-height:20px;color:#2c3032;-webkit-text-stroke:.18px #2c3032;letter-spacing:-0.10px;">don&rsquo;t have coverage yet in the selected area.</div><div class="t" style="left:552.8px;top:366.6px;font-size:11.5px;line-height:16px;color:#8b9196;letter-spacing:-0.22px;">1 min. ago</div><div class="t" style="left:206.6px;top:398.6px;font-size:14px;line-height:20px;color:#2c3032;-webkit-text-stroke:.18px #2c3032;letter-spacing:-0.10px;">Got it! To help you, could you please tell me:</div>
<div class="abs" style="left:213.500px;top:443px;width:4.500px;height:4.500px;border-radius:50%;background:#2c3032"></div>
<div class="abs" style="left:213.500px;top:463px;width:4.500px;height:4.500px;border-radius:50%;background:#2c3032"></div>
<div class="t" style="left:226.2px;top:434.6px;font-size:14px;line-height:20px;color:#2c3032;-webkit-text-stroke:.18px #2c3032;letter-spacing:-0.22px;"><b>What population</b> threshold should we consider?</div><div class="t" style="left:226.2px;top:454.6px;font-size:14px;line-height:20px;color:#2c3032;-webkit-text-stroke:.18px #2c3032;letter-spacing:-0.16px;"><b>How close</b> should the antennas be to these uncovered</div><div class="t" style="left:226.2px;top:474.6px;font-size:14px;line-height:20px;color:#2c3032;-webkit-text-stroke:.18px #2c3032;letter-spacing:-0.78px;">areas?</div>
<div class="bubble" style="left:238px;top:518px;width:367px;height:51.600px"></div>
<div class="t" style="left:250.1px;top:524.4px;font-size:14px;line-height:20px;color:#2c3032;-webkit-text-stroke:.18px #2c3032;letter-spacing:-0.07px;">Let&rsquo;s highlight 4G antennas within 5 km of any grid cell</div><div class="t" style="left:250.1px;top:544.4px;font-size:14px;line-height:20px;color:#2c3032;-webkit-text-stroke:.18px #2c3032;letter-spacing:-0.12px;">with more than 1,000 people uncovered.</div><div class="t" style="left:558.9px;top:578.2px;font-size:11.5px;line-height:16px;color:#8b9196;letter-spacing:0.09px;">Just now</div><div class="t" style="left:206.4px;top:610.2px;font-size:14px;line-height:20px;color:#2c3032;-webkit-text-stroke:.18px #2c3032;letter-spacing:-0.16px;">Perfect &mdash; I&rsquo;ll create a new layer showing all 4G antennas</div><div class="t" style="left:206.4px;top:630.2px;font-size:14px;line-height:20px;color:#2c3032;-webkit-text-stroke:.18px #2c3032;letter-spacing:-0.03px;">within 5 km of grid cells where the uncovered population is</div><div class="t" style="left:206.4px;top:650.2px;font-size:14px;line-height:20px;color:#2c3032;-webkit-text-stroke:.18px #2c3032;letter-spacing:-0.14px;">greater than 1,000 people.</div><div class="t" style="left:206.4px;top:694.0px;font-size:14px;line-height:20px;color:#2c3032;-webkit-text-stroke:.18px #2c3032;letter-spacing:-0.14px;">I&rsquo;ve added a new layer: there are <b>24 antennas</b> that match</div><div class="t" style="left:206.4px;top:714.0px;font-size:14px;line-height:20px;color:#2c3032;-webkit-text-stroke:.18px #2c3032;letter-spacing:-0.09px;">your criteria. They&rsquo;re highlighted in red on the map, and you</div><div class="t" style="left:206.4px;top:734.0px;font-size:14px;line-height:20px;color:#2c3032;-webkit-text-stroke:.18px #2c3032;letter-spacing:-0.13px;">can find this layer in your Layers panel.</div>
<div class="abs" style="left:206px;top:770px;width:24px;height:23.500px;border-radius:4px;background:#eef4fb"></div>
<svg class="ic" style="left:209.500px;top:772.500px" width="17.500" height="17.500" viewBox="0 0 24 24"><path fill="#0a6ddb" d="M1 21h4V9H1v12zm22-11c0-1.100-.9-2-2-2h-6.310l.950-4.570.030-.320c0-.410-.170-.790-.440-1.060L14.170 1 7.590 7.590C7.220 7.950 7 8.450 7 9v10c0 1.100.9 2 2 2h9c.830 0 1.540-.5 1.840-1.220l3.020-7.050c.090-.230.140-.470.140-.730v-2z"/></svg>
<svg class="ic" style="left:237.500px;top:772.500px" width="17.500" height="17.500" viewBox="0 0 24 24"><path fill="#5a6066" d="M15 3H6c-.830 0-1.540.5-1.840 1.220l-3.020 7.050c-.090.230-.140.470-.140.730v2c0 1.100.9 2 2 2h6.310l-.950 4.570-.030.320c0 .410.170.790.440 1.060L9.830 23l6.590-6.590c.360-.360.580-.860.580-1.410V5c0-1.100-.9-2-2-2zm0 12l-4.340 4.340L12 14H3v-2l3-7h9v10zm4-12h4v12h-4V3z"/></svg>
<div class="abs" style="left:262px;top:769px;width:1px;height:25px;background:#e2e5e7"></div>
<svg class="ic" style="left:270.500px;top:772.500px" width="17.500" height="17.500" viewBox="0 0 24 24"><path fill="#5a6066" d="M16 1H4c-1.100 0-2 .9-2 2v14h2V3h12V1zm3 4H8c-1.100 0-2 .9-2 2v14c0 1.100.9 2 2 2h11c1.100 0 2-.9 2-2V7c0-1.100-.9-2-2-2zm0 16H8V7h11v14z"/></svg>
<div class="abs" style="left:615.500px;top:751.500px;width:4px;height:52.500px;border-radius:2px;background:#c5c9cd"></div>
<div class="abs" style="left:198.500px;top:818px;width:414px;height:31px;border-radius:4px;background:#f7f8f9"></div>
<div class="t" style="left:210.4px;top:823.6px;font-size:14px;line-height:20px;color:#959a9f;letter-spacing:-0.17px;">Message AI Agent...</div>
<div class="abs" style="left:585.500px;top:821.500px;width:24px;height:24px;border-radius:4px;background:#e3e6e8"></div>
<svg class="ic" style="left:591.500px;top:827.500px" width="12" height="12" viewBox="0 0 12 12"><path d="M6 11V1.500M1.800 5.500L6 1.300L10.200 5.500" stroke="#a3a9ae" stroke-width="1.300" fill="none" stroke-linecap="round" stroke-linejoin="round"/></svg>
<div class="t" style="left:253.0px;top:857.4px;font-size:11.5px;line-height:16px;color:#7a8086;letter-spacing:0.05px;">Responses are AI-generated. Please verify key information.</div>
</body></html>
